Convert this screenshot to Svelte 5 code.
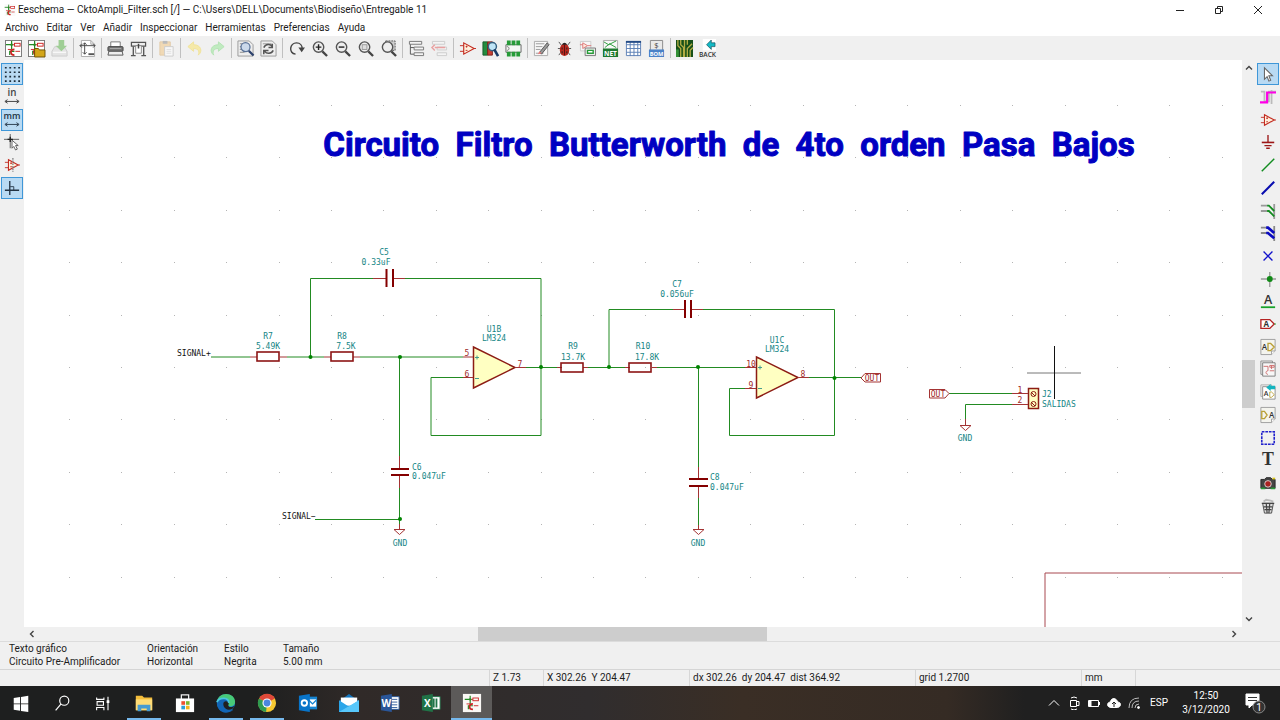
<script>
  const amp = '<path d="M5 3v12l11-6z" fill="#fff0dc" stroke="#c22a20" stroke-width="1.2"/><path d="M1 6h4M1 12h4M16 9h2M7 7h2M8 6v2M7 11h2" stroke="#c22a20"/>';
  const sheet = '<rect x=".5" y=".5" width="17" height="17" fill="#fff" stroke="#777"/>';
  const lens = '<circle cx="8" cy="7.500" r="5.500" fill="#eee" stroke="#555" stroke-width="1.500"/><path d="M12 12l5 5" stroke="#444" stroke-width="2.400"/>';
  const circuit = '<path d="M7 1v8M1 5h6v5M5 16v-4h5" stroke="#258a25" stroke-width="1.300"/><path d="M7 5h3M3 10h4M11 12h5" stroke="#c22" stroke-width="1"/><rect x="10" y="3.500" width="6" height="3" stroke="#c22"/><path d="M10 10c-5 0-5 6 0 6" stroke="#c22" stroke-width="1.800"/><circle cx="7" cy="5" r="1.300" fill="#258a25"/>';
  const page = '<path d="M1 .5h16v13l-4 4H1z" fill="#f4f4ee" stroke="#999"/><path d="M13 17.500v-4h4" fill="#fff" stroke="#999"/>';
  const icons = {
    app: '<rect x="1" y="0" width="16" height="18" fill="#fafafa"/>' + circuit,
    newsch: sheet + circuit,
    open: sheet + circuit + '<path d="M7 9h4l1 1.500h6V18H7z" fill="#d3a518" stroke="#695008"/>',
    save: '<path d="M1 12l3-5h10l3 5v5H1z" fill="#e4e4e4" stroke="#ccc"/><path d="M2 13h14" stroke="#fff"/><path d="M8 0h6v6h3l-6 6-6-6h3z" fill="#9fce95"/>',
    pagecfg: '<path d="M2.500 .5h10l4 4v13h-14zM12.500 .5v4h4" fill="#fff" stroke="#aaa"/><path d="M1 6h16M6 3v12M3 4L1 6l2 2M15 4l2 2-2 2M4 13l2 2 2-2M4 5l2-2 2 2" stroke="#444"/><path d="M10 15h6" stroke="#555" stroke-width="2"/>',
    print: '<path d="M4 8V2h10v6" fill="#fff" stroke="#777"/><rect x="1" y="7" width="16" height="5" rx="1" fill="#777" stroke="#444"/><path d="M2 12h14l1 4H1z" fill="#eee" stroke="#555"/><path d="M3 9h12" stroke="#aaa"/>',
    plot: '<path d="M1.500 2.500h15v4h-15z" fill="#eee" stroke="#555" stroke-width="1.300"/><path d="M3.500 7v9M14.500 7v9M1 16.500h5M12 16.500h5" stroke="#555" stroke-width="1.400"/><path d="M6 6h6v8H6z" fill="#fff" stroke="#888"/><path d="M9 4v5" stroke="#444" stroke-width="1.600"/>',
    paste: '<path d="M2 2h11v14H2z" fill="#f0d9b5" stroke="#e2cba8"/><path d="M5 1h5v3H5z" fill="#bbb"/><path d="M7 7h9v10H7z" fill="#f8f8f8" stroke="#ccc"/><path d="M9 10h5M9 12h5M9 14h5" stroke="#ddd"/>',
    undo: '<path d="M2 7l6-5v3c8 0 10 7 5 11 2-5-1-7-5-7v3z" fill="#f5e9a8" stroke="#f0e29a"/>',
    redo: '<path d="M16 7l-6-5v3C2 5 0 12 5 16 3 11 6 9 10 9v3z" fill="#c0ebc0" stroke="#b2e2b2"/>',
    find: '<path d="M1 1h12l4 4v12H1z" fill="#eee" stroke="#999"/><path d="M3 4h3M3 7h2M3 10h2M3 13h5" stroke="#888"/><circle cx="9" cy="7.500" r="4.800" fill="#cbd9eb" stroke="#587197" stroke-width="1.300"/><path d="M12.500 11.500l5 5" stroke="#2d426d" stroke-width="2.300"/>',
    replace: '<path d="M1 1h12l4 4v12H1z" fill="#eee" stroke="#999"/><path d="M3 4h9" stroke="#999"/><path d="M4 8c2-4 7-4 9-1M13 4v4H9M14 11c-2 4-7 4-9 1M4 15v-4h5" stroke="#555" stroke-width="1.600"/>',
    refresh: '<path d="M8 15C0 14 2 3 9 3c4 0 6 3 6 6" stroke="#444" stroke-width="1.500"/><path d="M11 8h7l-3.500 5z" fill="#444"/>',
    zin: lens + '<path d="M5 7.500h6M8 4.500v6" stroke="#222" stroke-width="1.500"/>',
    zout: lens + '<path d="M5 7.500h6" stroke="#222" stroke-width="1.500"/>',
    zfit: lens + '<rect x="5.500" y="5" width="5" height="5" fill="#ddd" stroke="#999"/>',
    zsel: '<path d="M6 1h10v10H6z" fill="#ccc" stroke="#555" stroke-dasharray="2 1"/>' + lens,
    hier: '<path d="M2.500 2v13h4M2.500 8h4" stroke="#555"/><path d="M1.500 1.500h13v3h-13zM6.500 7.500h10v3h-10zM6.500 13.500h10v3h-10z" fill="#f4f4f4" stroke="#777"/>',
    leave: '<path d="M1.500 1.500h13v3h-13zM6.500 7.500h10v3h-10zM6.500 13.500h10v3h-10z" fill="#f4f4f4" stroke="#ccc"/><path d="M15 8H4M4 5L1 8l3 3" stroke="#e9a0a0" stroke-width="1.500"/>',
    amp,
    lib: '<path d="M1 2h5v14H1z" fill="#238c3e" stroke="#155b29"/><path d="M6 2h5v14H6z" fill="#c74135" stroke="#812018"/><circle cx="11" cy="7" r="4.300" fill="#bfe4f6" stroke="#366080" stroke-width="1.500"/><path d="M13 10l4 7" stroke="#193b67" stroke-width="2.800"/>',
    foot: '<path d="M1 5h16v8H1z" fill="#f4f8f4" stroke="#666"/><path d="M2 3h4M7 3h4M12 3h4M2 15h4M7 15h4M12 15h4" stroke="#269b38" stroke-width="5"/><path d="M2 7c3 0 3 4 0 4" stroke="#777"/>',
    annot: '<path d="M1.500 1.500h14v15h-14z" fill="#f8f8f8" stroke="#aaa"/><path d="M3 4h9M3 7h7M3 10h5M3 14h8" stroke="#999"/><path d="M7 13l8-10 2 2-8 10z" fill="#999" stroke="#555"/><path d="M5 15l4-1-2-2z" fill="#e77"/>',
    bug: '<path d="M3 2l3 4M15 2l-3 4M2 9h14M3 16l3-4M15 16l-3-4" stroke="#555"/><ellipse cx="9" cy="10.500" rx="5" ry="6.500" fill="#b8281f"/><path d="M6 5q3-4 6 0z" fill="#222"/><path d="M9 5v11" stroke="#511"/><path d="M6 9h1M11 9h1M6 13h1M11 13h1" stroke="#222" stroke-width="2"/>',
    assign: '<path d="M1.500 1.500h11v10h-11z" fill="#f7f7f7" stroke="#ccc"/><path d="M4 3v6l5-3zM1 5h3M9 6h4" fill="#ffe9dc" stroke="#d77"/><path d="M6.500 8.500h11v8h-11z" fill="#eee" stroke="#777"/><path d="M9 11h6v3H9z" fill="#fff" stroke="#269b38" stroke-width="1.500"/>',
    net: '<path d="M1.500 .5h15v17h-15z" fill="#f8f8f8" stroke="#aaa"/><path d="M2 2l5 3 8-4M3 8l5-4 7 4" stroke="#269b38"/><path d="M1 9h16v9H1z" fill="#1e7930"/><text x="9" y="16.500" text-anchor="middle" font-size="7" font-weight="700" fill="#fff">NET</text>',
    table: '<path d="M1.500 1.500h15v15h-15zM1.500 5h15M1.500 9h15M1.500 13h15M5.500 2v15M9.500 2v15M13.500 2v15" fill="#fff" stroke="#5b80b6"/><path d="M1 2h16" stroke="#234b87" stroke-width="2"/>',
    bom: '<path d="M2.500 .5h13v13h-13z" fill="#e9e9e9" stroke="#888"/><text x="9" y="8.500" text-anchor="middle" font-size="8" fill="#444">$</text><path d="M1 10h16v8H1z" fill="#4a82c8"/><text x="9" y="16.500" text-anchor="middle" font-size="6" font-weight="700" fill="#fff">BOM</text>',
    pcb: '<path d="M0 0h18v18H0z" fill="#164f18"/><path d="M2 0v6l3 3v9M5 0v5l3 3v10M9 0v18M12 18V9l5-5M15 18v-7l3-3M12 0v5" stroke="#b3ac45" stroke-width="1.400"/><path d="M0 10h3v8H0z" fill="#349137"/>',
    back: '<path d="M4 -1h14v12H4z" fill="#fff"/><path d="M8 5l5-5v3h4v4h-4v3z" fill="#12b9c5" stroke="#114b55" stroke-width=".7"/><text x="9" y="18" text-anchor="middle" font-size="7" font-weight="600" fill="#333">BACK</text>',
    grid: '<path d="M1 2h17M1 7h17M1 12h17M1 17h17" stroke="#1c2c3a" stroke-width="1.800" stroke-dasharray="2 3"/>',
    inch: '<text x="9" y="8" text-anchor="middle" font-size="11" font-weight="600" fill="#444">in</text><path d="M2 14h14M4 12l-3 2 3 2M14 12l3 2-3 2" stroke="#333"/>',
    mm: '<text x="9" y="8" text-anchor="middle" font-size="10" font-weight="600" fill="#234">mm</text><path d="M2 14h14M4 12l-3 2 3 2M14 12l3 2-3 2" stroke="#234"/>',
    cursor: '<path d="M0 6h17M7 0v16" stroke="#555"/><path d="M4 6h6M7 3v6" stroke="#222" stroke-width="1.500"/><path d="M9 7v9l2-2 2 4 2-1-2-4h3z" fill="#fff" stroke="#555"/>',
    hidden: amp + '<path d="M10 1v16" stroke="#888" stroke-dasharray="2 1" stroke-width="1.500"/>',
    ortho: '<path d="M6.500 1v16M1 11.500h16" stroke="#234" stroke-width="1.500"/><path d="M7 7.500h4v4" stroke="#234"/>',
    select: '<path d="M5 2v13l3-3 2 5 2-1-2-5h4z" fill="#fff" stroke="#666" stroke-width="1.200"/>',
    highlight: '<path d="M1 3h4v11h5V3h8M13 1v16" stroke="#bbb" stroke-width="2"/><path d="M0 15h8V4h10" stroke="#ff00e8" stroke-width="2.400"/>',
    ground: '<path d="M9 1v8M5 13h8M7 16h4" stroke="#9c1616" stroke-width="1.500"/><path d="M2 9.500h14" stroke="#9c1616" stroke-width="1.800"/>',
    wire: '<path d="M2 16L16 2" stroke="#128c20" stroke-width="1.600"/>',
    bus: '<path d="M2 16L16 2" stroke="#080caf" stroke-width="2.200"/>',
    went: '<path d="M1 3h7M1 9h7M16 1v17" stroke="#999" stroke-width="2"/><path d="M8 3h2l6 6M8 9h2l6 6" stroke="#128c20" stroke-width="2"/>',
    bent: '<path d="M1 3h7M1 9h7M16 1v17" stroke="#888" stroke-width="2"/><path d="M7 3h2l7 6M7 9h2l7 6" stroke="#0b0bc1" stroke-width="3"/>',
    nc: '<path d="M4 4l10 10M14 4L4 14" stroke="#1111cb" stroke-width="1.500"/>',
    junction: '<path d="M1 9h17M11 1v17" stroke="#999" stroke-width="1.500"/><circle cx="11" cy="9" r="3.300" fill="#118a17"/>',
    label: '<text x="9" y="12" text-anchor="middle" font-size="14" font-weight="600" fill="#333">A</text><path d="M1 16h16" stroke="#17a32a" stroke-width="2"/>',
    glabel: '<path d="M1 4h10l5 5-5 5H1z" fill="#fff" stroke="#b42222" stroke-width="1.500"/><text x="7" y="12" text-anchor="middle" font-size="9" font-weight="700" fill="#333">A</text><path d="M16 9h2" stroke="#17a32a"/>',
    hlabel: page + '<text x="5" y="12" text-anchor="middle" font-size="9" font-weight="600" fill="#333">A</text><path d="M9 5h3l4 4-4 4H9z" stroke="#bba037" stroke-width="1.500"/>',
    newsheet: '<path d="M1 0h13v15H1z" fill="#eee" stroke="#888"/><path d="M3 2h14v15H3z" fill="#f7f7f7" stroke="#777"/><path d="M4 6h5v5M13 5v4M9 11c-3 0-3 4 0 4M11 11h5" stroke="#c66"/><path d="M11 5h5v2h-5z" stroke="#c66"/>',
    impsheet: '<path d="M1 1h12v13H1z" fill="#eee" stroke="#aaa"/><path d="M3 3h14v14H3z" fill="#fff" stroke="#888"/><text x="7" y="14" text-anchor="middle" font-size="8" font-weight="600" fill="#333">A</text><path d="M11 9h2l3 3-3 3h-2z" stroke="#bba037"/><path d="M7 4l5-4v2h5v4h-5v2z" fill="#14b4bf"/>',
    pin: page + '<path d="M2 5h3l3 4-3 4H2z" stroke="#bba037" stroke-width="1.500"/><text x="13" y="12" text-anchor="middle" font-size="9" font-weight="600" fill="#333">A</text>',
    lines: '<rect x="2" y="2" width="14" height="14" stroke="#2222cc" stroke-width="1.800" stroke-dasharray="3 1"/>',
    text: '<text x="9" y="15" text-anchor="middle" font-size="20" font-weight="700" class="serif" fill="#333">T</text>',
    camera: '<path d="M1 5h4l2-2h5l2 2h3v10H1z" fill="#444" stroke="#222"/><circle cx="9" cy="10" r="3.700" fill="#a22" stroke="#ddd"/><path d="M14 4h3" stroke="#dac719" stroke-width="2"/><path d="M1 15h5M12 15h5" stroke="#2a9639" stroke-width="2"/>',
    trash: '<path d="M4 4l3-2 5 1 3 1" stroke="#bbb" stroke-width="2"/><path d="M3 6h12l-2 11H5z" fill="#ddd" stroke="#444"/><path d="M2 6h14M4 10h10M5 13h8M7 6l1 11M11 6l-1 11" stroke="#444" stroke-width="1.300"/>'
  };

  const toolGroups = [
    [['newsch', 'Nuevo'], ['open', 'Abrir'], ['save', 'Guardar']],
    [['pagecfg', 'Ajustes de página']],
    [['print', 'Imprimir'], ['plot', 'Trazar']],
    [['paste', 'Pegar']],
    [['undo', 'Deshacer'], ['redo', 'Rehacer']],
    [['find', 'Buscar'], ['replace', 'Reemplazar']],
    [['refresh', 'Refrescar'], ['zin', 'Acercar'], ['zout', 'Alejar'], ['zfit', 'Ajustar'], ['zsel', 'Acercar selección']],
    [['hier', 'Jerarquía'], ['leave', 'Salir de hoja']],
    [['amp', 'Editor de símbolos'], ['lib', 'Bibliotecas'], ['foot', 'Huellas']],
    [['annot', 'Anotar'], ['bug', 'Comprobar reglas'], ['assign', 'Asignar huellas'], ['net', 'Lista de redes'], ['table', 'Editar campos'], ['bom', 'Lista de materiales']],
    [['pcb', 'Abrir placa'], ['back', 'Importar huellas']]
  ];
  const leftTools = [['grid', 'Rejilla', true], ['inch', 'Pulgadas'], ['mm', 'Milímetros', true], ['cursor', 'Cursor'], ['hidden', 'Pines ocultos'], ['ortho', 'Ortogonal', true]];
  const rightTools = [['select', 'Seleccionar', true], ['highlight', 'Resaltar red'], ['amp', 'Añadir símbolo'], ['ground', 'Añadir alimentación'], ['wire', 'Cable'], ['bus', 'Bus'], ['went', 'Entrada de cable'], ['bent', 'Entrada de bus'], ['nc', 'No conectado'], ['junction', 'Unión'], ['label', 'Etiqueta'], ['glabel', 'Etiqueta global'], ['hlabel', 'Etiqueta jerárquica'], ['newsheet', 'Hoja'], ['impsheet', 'Importar pin'], ['pin', 'Pin de hoja'], ['lines', 'Líneas'], ['text', 'Texto'], ['camera', 'Imagen'], ['trash', 'Borrar']];
  const menus = ['Archivo', 'Editar', 'Ver', 'Añadir', 'Inspeccionar', 'Herramientas', 'Preferencias', 'Ayuda'];
  const info = [['Texto gráfico', 'Circuito Pre-Amplificador'], ['Orientación', 'Horizontal'], ['Estilo', 'Negrita'], ['Tamaño', '5.00 mm']];

  const apps = [
    { label: 'Inicio', art: '<path d="M3 5.500l7-1v7H3zM11 4.300l8-1.300v8.500h-8zM3 12.500h7v7l-7-1zM11 12.500h8V21l-8-1.300z" fill="#fff"/>' },
    { label: 'Buscar', art: '<circle cx="13.500" cy="8.500" r="5" stroke="#fff" stroke-width="1.300"/><path d="M10 12l-6 7" stroke="#fff" stroke-width="1.300"/>' },
    { label: 'Vista de tareas', art: '<path d="M4 5v2h8V5M4 19v-3h8v3M4.500 9.500h7v4h-7zM16.500 4v15" stroke="#fff" stroke-width="1.200"/><path d="M15 8h3v3h-3z" fill="#fff"/>' },
    { label: 'Explorador', open: true, art: '<path d="M2 3h7l2 2h9v14H2z" fill="#f3bd3b"/><path d="M2 7h18v12H2z" fill="#ffdc76"/><path d="M4 20v-7h14v7h-4v-3H8v3z" fill="#479bd1"/>' },
    { label: 'Tienda', art: '<path d="M7 7V2h8v5" stroke="#eee" stroke-width="1.400"/><path d="M1 6h20v15H1z" fill="#fff"/><path d="M7 9h4v4H7z" fill="#ee5030"/><path d="M12 9h4v4h-4z" fill="#7bb731"/><path d="M7 14h4v4H7z" fill="#2b9eda"/><path d="M12 14h4v4h-4z" fill="#f6b51e"/>' },
    { label: 'Edge', open: true, art: '<circle cx="11" cy="11" r="10" fill="#167fd0"/><path d="M1 11C1-2 21-2 21 10c0 6-8 6-8 2 2-6-8-8-12-1z" fill="#48ca78"/><path d="M1 10c3-6 14-5 13 1-6-4-8 8 5 8C8 26 0 18 1 10z" fill="#1265b5"/><path d="M8 12c0-5 7-3 6 0-2 3 3 5 6 2-1 7-12 5-12-2z" fill="#202020"/><path d="M1 10c3-6 14-5 13 1" stroke="#49c5dd" stroke-width="2"/>' },
    { label: 'Chrome', open: true, art: '<circle cx="11" cy="11" r="10" fill="#f6c832"/><path d="M11 11L2.300 6A10 10 0 0 1 19.700 6z" fill="#df4939"/><path d="M11 11l-1 10A10 10 0 0 1 2.300 6z" fill="#2f9b50"/><circle cx="11" cy="11" r="5" fill="#fff"/><circle cx="11" cy="11" r="3.800" fill="#4c86dd"/>' },
    { label: 'Outlook', art: '<path d="M11 4h10v14H11z" fill="#1685d2"/><path d="M12 7h8v8h-8z" fill="#fff"/><path d="M12 8l4 4 4-4" stroke="#1685d2" stroke-width="1.500"/><path d="M1 3l12-2v20L1 19z" fill="#0874c9"/><circle cx="7" cy="11" r="3" stroke="#fff" stroke-width="2"/>' },
    { label: 'Correo', art: '<path d="M0 9l11-8 11 8v12H0z" fill="#1476bd"/><path d="M2 5h18v9H2z" fill="#fff"/><path d="M0 8l11 7 11-7v13H0z" fill="#2ba5e9"/><path d="M0 21l22-13v13z" fill="#58c7fa"/>' },
    { label: 'Word', art: '<path d="M11 4h10v14H11z" fill="#fff" stroke="#2a5699"/><path d="M12 7h7M12 10h7M12 13h7M12 16h7" stroke="#2a5699"/><path d="M1 3l12-2v20L1 19z" fill="#2a5699"/><text x="7" y="15" text-anchor="middle" font-size="11" font-weight="700" fill="#fff">W</text>' },
    { label: 'Excel', art: '<path d="M11 4h10v14H11z" fill="#fff" stroke="#207347"/><path d="M14 6v10M17 6v10" stroke="#207347" stroke-width="2"/><path d="M1 3l12-2v20L1 19z" fill="#207347"/><text x="7" y="15" text-anchor="middle" font-size="11" font-weight="700" fill="#fff">X</text>' },
    { label: 'Eeschema', open: true, active: true, art: '<path d="M1 1h20v20H1z" fill="#faf8f5"/><g transform="translate(2 2)">' + circuit + '</g>' }
  ];

  const gridDots = [];
  for (let r = 0; r < 10; r++) for (let c = 0; c < 23; c++) gridDots.push([Math.round(69 + c * 52.4), Math.round(105 + r * 52.4)]);

  const wires = [
    'M211 357H250M287 357H324M360 357H463', 'M310.5 357V278.5H373', 'M405 278.5H541V435.5H431V377.5H463',
    'M526 367.5H557M588 367.5H625M657 367.5H745', 'M609 367.5V309.500H673', 'M703 309.500H834.500V435.500H729.500V388.500H745',
    'M809 377.500H861', 'M399.500 357V456M399.500 488V524M315 519.500H400', 'M698.500 367V467M698.500 498V525',
    'M949 393.500H1012M1012 404.500H965.500V419'
  ];
  const pins = 'M250 357h7M280 357h7M324 357h7M353 357h7M463 357h10M463 377.500h10M515 367.500h11M557 367.500h5M583 367.500h5M625 367.500h5M652 367.500h5M745 367.500h11M745 388.500h11M798 377.500h11M373 278.500h13M393 278.500h12M673 309.500h12M691 309.500h12M399.500 456v13M399.500 475v13M399.500 524v5M698.500 467v12M698.500 486v12M698.500 525v4M1012 393.500h16M1012 404.500h16M965.500 419v6';
  const joints = [[310.5, 357], [400, 357], [541, 367], [609, 367], [698, 367], [834.5, 378], [400, 519]];
  const resistors = [[257, 352], [331, 352], [561, 363], [629, 363]];
  const names = [
    [384, 255, 'C5'], [376, 265, '0.33uF'], [268, 339, 'R7'], [268, 349, '5.49K'], [342, 339, 'R8'], [346, 349, '7.5K'],
    [494, 332, 'U1B'], [494, 341, 'LM324'], [677, 287, 'C7'], [677, 297, '0.056uF'], [573, 349, 'R9'], [573, 360, '13.7K'],
    [643, 349, 'R10'], [647, 360, '17.8K'], [777, 343, 'U1C'], [777, 352, 'LM324'], [400, 546, 'GND'], [698, 546, 'GND'], [965, 441, 'GND']
  ];
  const sideNames = [[412, 470, 'C6'], [412, 479, '0.047uF'], [710, 480, 'C8'], [710, 490, '0.047uF'], [1042, 397, 'J2'], [1042, 407, 'SALIDAS']];
  const pinNumbers = [[467, 356, '5'], [467, 377, '6'], [520, 367, '7'], [751, 367, '10'], [751, 388, '9'], [803, 377, '8'], [1020, 393, '1'], [1020, 403, '2']];
</script>

{#snippet tool(t)}
  <button class="tool" class:on={t[2]} aria-label={t[1]}>
    <svg viewBox="0 0 18 18" fill="none" aria-hidden="true">{@html icons[t[0]]}</svg>
  </button>
{/snippet}

<div class="window">
  <header class="titlebar">
    <svg class="appicon" viewBox="0 0 18 18" fill="none" aria-hidden="true">{@html icons.app}</svg>
    <span class="title">Eeschema — CktoAmpli_Filter.sch [/] — C:\Users\DELL\Documents\Biodiseño\Entregable 11</span>
    <button class="wbtn" aria-label="Minimizar"><svg viewBox="0 0 10 10"><path d="M1 5.500h8" /></svg></button>
    <button class="wbtn" aria-label="Restaurar"><svg viewBox="0 0 10 10"><path d="M1.500 3.500h5v5h-5zM3.500 3V1.500h5v5H7" /></svg></button>
    <button class="wbtn" aria-label="Cerrar"><svg viewBox="0 0 10 10"><path d="M1 1l8 8M9 1l-8 8" /></svg></button>
  </header>

  <nav class="menubar">
    {#each menus as m}<button>{m}</button>{/each}
  </nav>

  <div class="toolbar">
    {#each toolGroups as group}
      <div class="group">{#each group as t}{@render tool(t)}{/each}</div>
    {/each}
  </div>

  <main>
    <aside class="side left">{#each leftTools as t}{@render tool(t)}{/each}</aside>

    <section class="viewport">
      <svg class="sheet" viewBox="24 60 1218 567" preserveAspectRatio="xMinYMin meet" fill="none">
        {#each gridDots as [x, y]}<rect {x} {y} width="1" height="1" fill="#b4b4b4" />{/each}
        <path d="M1045 627V573H1242" stroke="#a84850" />
        <text class="heading" x="729" y="156">Circuito  Filtro  Butterworth  de  4to  orden  Pasa  Bajos</text>

        {#each wires as d}<path {d} class="wire" />{/each}
        <path d="M473.500 347v41l41.500-20.500z" class="body" />
        <path d="M756.500 357v41l41.500-20.500z" class="body" />
        <path d="M1028.500 388.500h10v20h-10z" class="body" />
        <path d={pins} class="pin" />
        {#each resistors as [x, y]}<rect {x} {y} width="22" height="9" class="part" />{/each}
        <path class="plate" d="M386.500 269v18M393 269v18M685 300v18M691 300v18M391 469h18M391 475h18M689 479h19M689 486h19" />
        <path class="pin" d="M394 529.500h11l-5.500 5zM693 529.500h11l-5.500 5zM960 425.500h11l-5.500 5z" />
        <path class="pin" d="M861 378l4-4.500h15.500v8.500H865zM929.500 389.500H945l4 4-4 4.500h-15.500z" />
        <g class="screws"><circle cx="1033.500" cy="394" r="2.500" /><circle cx="1033.500" cy="404" r="2.500" /><path d="M1031 392l4 4M1031 402l4 4" /></g>
        {#each joints as [x, y]}<circle cx={x} cy={y} r="2" fill="#008400" />{/each}

        <path d="M475 357.500h4M477 355.500v4M475 378.500h4M758 367.500h4M760 365.500v4M758 388.500h4" stroke="#459c8c" />
        <g class="label mid teal">{#each names as [x, y, s]}<text {x} {y}>{s}</text>{/each}</g>
        <g class="label teal">{#each sideNames as [x, y, s]}<text {x} {y}>{s}</text>{/each}</g>
        <g class="label mid red">
          {#each pinNumbers as [x, y, s]}<text {x} {y}>{s}</text>{/each}
          <text x="872" y="381">OUT</text><text x="938" y="397">OUT</text>
        </g>
        <g class="label black"><text x="177" y="356">SIGNAL+</text><text x="282" y="519">SIGNAL−</text></g>
        <path d="M1027 373H1081" stroke="#777" /><path d="M1054.500 346V399" stroke="#111" />
      </svg>
      <div class="vscroll">
        <svg viewBox="0 0 8 8"><path d="M1 5.500l3-3 3 3" /></svg>
        <div class="track"><span class="before"></span><span class="thumb"></span><span class="after"></span></div>
        <svg viewBox="0 0 8 8"><path d="M1 2.500l3 3 3-3" /></svg>
      </div>
      <div class="hscroll">
        <svg viewBox="0 0 8 8"><path d="M5.500 1l-3 3 3 3" /></svg>
        <div class="track"><span class="before"></span><span class="thumb"></span><span class="after"></span></div>
        <svg viewBox="0 0 8 8"><path d="M2.500 1l3 3-3 3" /></svg>
      </div>
    </section>

    <aside class="side right">{#each rightTools as t}{@render tool(t)}{/each}</aside>
  </main>

  <section class="info">
    {#each info as [k, v]}<div><span>{k}</span><span>{v}</span></div>{/each}
  </section>

  <footer class="status">
    <span></span><span>Z 1.73</span><span>X 302.26&nbsp; Y 204.47</span><span>dx 302.26&nbsp; dy 204.47&nbsp; dist 364.92</span><span>grid 1.2700</span><span>mm</span><span></span>
  </footer>

  <div class="taskbar">
    <div class="apps">
      {#each apps as a}
        <button class="app" class:open={a.open} class:active={a.active} aria-label={a.label}>
          <svg viewBox="0 0 22 22" fill="none" aria-hidden="true">{@html a.art}</svg>
        </button>
      {/each}
    </div>
    <div class="tray">
      <svg viewBox="0 0 14 14"><path d="M2 9.500l5-5 5 5" /></svg>
      <svg viewBox="0 0 14 14"><path d="M3.500 4.500h6v6h-6zM10 5.500h2v4h-2M4 2q3-2 6 0M4 13q3 2 6 0" /></svg>
      <svg viewBox="0 0 14 14"><path d="M1.500 4.500h10v6h-10zM12.500 6v3" /><path d="M2 5h2v5H2z" fill="#fff" /></svg>
      <svg viewBox="0 0 14 14"><path d="M4 11.500C-1 11 0 6 3.500 6 4 1 10 2 10.500 6c4 0 4 5 0 5.500z" fill="#fff" /><path d="M7 11V6M5 8l2-2 2 2" stroke="#222" /></svg>
      <svg viewBox="0 0 14 14"><path d="M2 12Q2 2 12 2M5 12q0-7 7-7M8 12q0-4 4-4" stroke="#bbb" /><circle cx="11.500" cy="11.500" r="1" fill="#fff" /></svg>
      <span class="lang">ESP</span>
      <time><span>12:50</span><span>3/12/2020</span></time>
      <button class="notif" aria-label="Notificaciones">
        <svg viewBox="0 0 22 22"><path d="M2 2h13v11H8l-3 3v-3H2z" fill="#fff" /><path d="M4 5.500h9M4 8.500h9" stroke="#333" /><circle cx="15" cy="15" r="6" fill="#333" stroke="#888" /><text x="15" y="18.500" text-anchor="middle" font-size="10" fill="#fff" stroke="none">1</text></svg>
      </button>
    </div>
  </div>
</div>

<style>
  :global(body) { margin: 0; }
  .window { display: flex; flex-direction: column; height: 100vh; min-height: 640px; overflow: hidden; background: #f0f0f0; color: #1c1c1c; font: 10px/14px Roboto, "Open Sans", sans-serif; }
  button { border: 0; padding: 0; margin: 0; background: none; font: inherit; color: inherit; display: grid; place-items: center; }
  .titlebar { display: flex; align-items: center; flex: 0 0 20px; background: #fff; padding: 0 3px 0 4px; }
  .appicon { width: 12px; height: 14px; margin-right: 2px; }
  .title { flex: 1; white-space: nowrap; overflow: hidden; }
  .wbtn { width: 39px; height: 20px; }
  .wbtn svg { width: 10px; height: 10px; fill: none; stroke: #222; }
  .menubar { display: flex; gap: 8px; flex: 0 0 16px; padding-left: 5px; background: #fff; }
  .toolbar { display: flex; align-items: center; flex: 0 0 24px; padding-left: 2px; }
  .group { display: flex; align-items: center; }
  .group + .group { border-left: 1px solid #c0c0c0; padding-left: 2px; margin-left: 2px; }
  .tool { width: 23px; height: 22px; box-sizing: border-box; }
  .tool svg { width: 17px; height: 17px; overflow: visible; font-family: "Open Sans", sans-serif; }
  .tool :global(.serif) { font-family: "Liberation Serif", serif; }
  .group .tool { height: 20px; }
  .tool.on { background: #b9daf3; border: 1px solid #3f97d8; }
  .side .tool svg { width: 16px; height: 16px; }
  main { flex: 1; min-height: 0; display: flex; }
  .side { display: grid; grid-auto-rows: 1fr; justify-items: center; align-items: center; align-self: flex-start; flex: none; padding-top: 3px; }
  .side .tool { width: 22px; }
  .left { width: 24px; height: 136px; }
  .right { width: 25px; height: 454px; }
  .viewport { flex: 1; min-width: 0; display: grid; grid-template: minmax(0, 1fr) 14px / minmax(0, 1fr) 13px; }
  .sheet { width: 100%; height: 100%; background: #fff; display: block; }
  .vscroll, .hscroll { display: flex; align-items: center; background: #f0f0f0; }
  .vscroll { flex-direction: column; padding: 4px 0; }
  .hscroll { padding: 0 4px; }
  .vscroll svg, .hscroll svg { width: 8px; height: 8px; flex: none; fill: none; stroke: #444; stroke-width: 1.4; }
  .track { flex: 1; display: flex; align-self: stretch; }
  .vscroll .track { flex-direction: column; }
  .thumb { background: #cdcdcd; }
  .vscroll .before { flex: 288; } .vscroll .thumb { flex: 48; } .vscroll .after { flex: 207; }
  .hscroll .before { flex: 442; } .hscroll .thumb { flex: 289; } .hscroll .after { flex: 463; }
  .heading { font: 700 33px Roboto, sans-serif; text-anchor: middle; white-space: pre; fill: #0000c2; stroke: #0000c2; stroke-width: 1; stroke-linejoin: round; }
  .wire { stroke: #228b22; }
  .pin { stroke: #a43434; }
  .body { fill: #ffffc2; stroke: #8c1c14; stroke-width: 1.5; }
  .part { stroke: #8c1515; stroke-width: 1.6; }
  .plate { stroke: #840000; stroke-width: 2; }
  .screws { stroke: #8c1c14; }
  .label { font: 8px "DejaVu Sans Mono", monospace; }
  .mid { text-anchor: middle; }
  .teal { fill: #148585; } .red { fill: #a02828; } .black { fill: #111; }
  .info { display: grid; grid-template-columns: 138px 77px 59px auto; justify-content: start; flex: 0 0 28px; box-sizing: border-box; padding: 0 9px; border-top: 1px solid #dcdcdc; line-height: 13px; white-space: nowrap; }
  .info div { display: flex; flex-direction: column; }
  .status { display: grid; grid-template-columns: 489fr 54fr 146fr 226fr 166fr 54fr 145fr; flex: 0 0 17px; border-top: 1px solid #d5d5d5; box-sizing: border-box; line-height: 16px; white-space: nowrap; }
  .status span + span { border-left: 1px solid #d7d7d7; padding-left: 3px; }
  .taskbar { flex: 0 0 34px; display: flex; justify-content: space-between; color: #fff; background: linear-gradient(90deg, #1e1f1f 20%, #302a28 28%, #302d2e 46%, #3a2e25 58%, #352b24 74%, #202020 80%); }
  .apps { display: flex; }
  .app { width: 41px; height: 34px; box-sizing: border-box; }
  .app svg { width: 20px; height: 20px; font-family: "Open Sans", sans-serif; }
  .open { background: linear-gradient(#76b9ed, #76b9ed) center bottom / 34px 2px no-repeat; }
  .open.active { background: linear-gradient(#76b9ed, #76b9ed) center bottom / 100% 2px no-repeat #5c5a59; }
  .tray { display: flex; align-items: center; gap: 6px; padding-right: 14px; }
  .tray svg { width: 14px; height: 14px; fill: none; stroke: #fff; }
  .lang { padding-left: 3px; }
  .tray time { display: flex; flex-direction: column; align-items: center; width: 64px; white-space: nowrap; }
  .tray .notif svg { width: 22px; height: 22px; }
</style>
